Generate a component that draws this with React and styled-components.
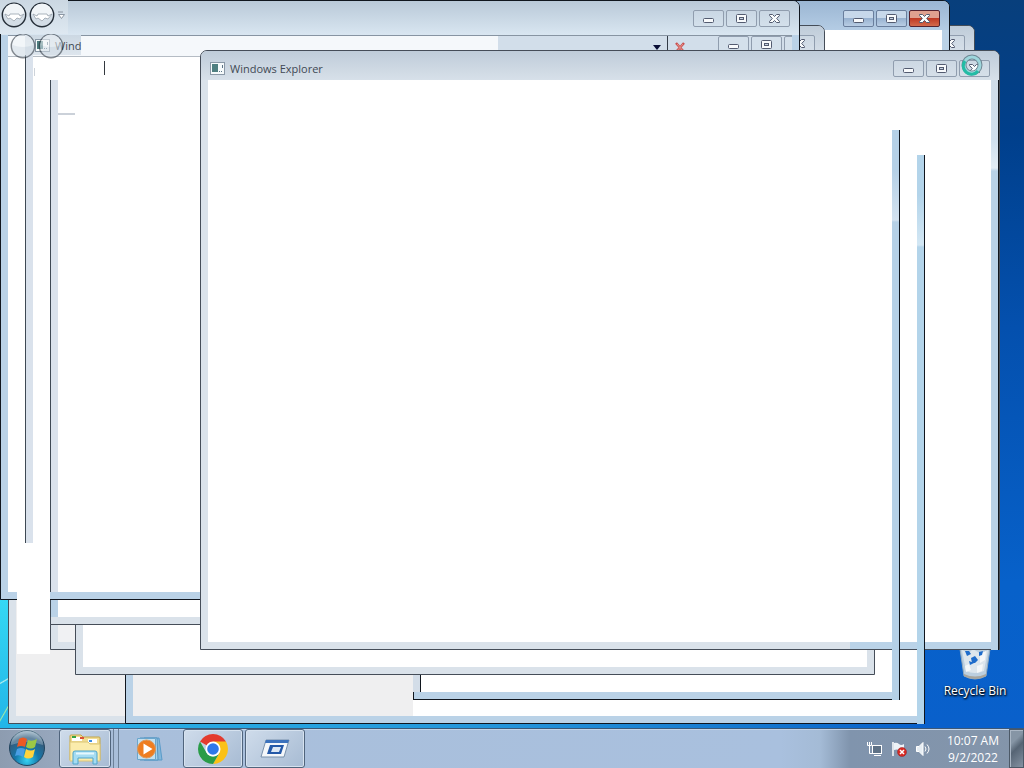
import React from "react";
import styled, { createGlobalStyle, css } from "styled-components";

const backWindows = [
  { x: 8, y: 124, w: 800, h: 600, body: "#efeff0" },
  { x: 175, y: 25, w: 800, h: 600 },
  { x: 150, y: 0, w: 800, h: 600, active: true },
  { x: 125, y: 124, w: 800, h: 600, active: true, split: true },
  { x: 413, y: 130, w: 487, h: 570, active: true, square: true },
  { x: 50, y: 50, w: 800, h: 600, body: "#f0f1f3" },
  { x: 75, y: 75, w: 800, h: 600 },
  { x: 50, y: 25, w: 775, h: 600 },
];

const MinIcon = () => (
  <svg width="13" height="11" viewBox="0 0 13 11">
    <rect x="1.5" y="5.5" width="10" height="4" rx="1" fill="#f8fafc" stroke="#535b70" />
  </svg>
);

const MaxIcon = () => (
  <svg width="13" height="11" viewBox="0 0 13 11">
    <rect x="1.5" y="1.5" width="10" height="8" rx="1" fill="#f8fafc" stroke="#535b70" />
    <rect x="4.5" y="4.5" width="4" height="2" fill="#c8d4e2" stroke="#535b70" />
  </svg>
);

const CloseIcon = () => (
  <svg width="13" height="11" viewBox="0 0 13 11">
    <path
      d="M1.5 1.5h3l2 2 2-2h3v1L8.700 5.500l2.800 3v1h-3l-2-2-2 2h-3v-1l2.800-3-2.800-3z"
      fill="#fafcfd"
      stroke="#535b70"
    />
  </svg>
);

const ExplorerIcon = () => (
  <svg width="15" height="13" viewBox="0 0 15 13">
    <rect x="0.5" y="0.5" width="14" height="12" fill="#f6fafb" stroke="#8a98a6" />
    <rect x="2" y="2" width="6" height="8" fill="#4f7f80" />
    <path d="M9 9.500h1M11 9.500h1M12.500 3v3" stroke="#5c7486" />
  </svg>
);

const NavButton = ({ faded }) => (
  <svg width="26" height="26" viewBox="0 0 26 26" opacity={faded ? 0.55 : 1}>
    <circle cx="13" cy="13" r="11.700" fill="#d3dde6" stroke="#252e38" strokeWidth="1.400" />
    <path d="M2.500 12a10.500 10.500 0 0 1 21 0q-10.500 4-21 0z" fill="#f1f5f8" />
    {!faded && (
      <path
        d="M4 12l4 2 1-2h9l1 2 4-2-4 5-3-1-3 3-4-3-2 1z"
        fill="#fff"
        stroke="#98a2ac"
        strokeWidth="0.800"
      />
    )}
  </svg>
);

const StartOrb = () => (
  <svg width="38" height="38" viewBox="0 0 38 38">
    <defs>
      <radialGradient id="orb" cx="50%" cy="85%" r="85%">
        <stop offset="0" stopColor="#35d2f2" />
        <stop offset="0.400" stopColor="#1477aa" />
        <stop offset="0.750" stopColor="#345c7d" />
        <stop offset="1" stopColor="#a9bdcc" />
      </radialGradient>
    </defs>
    <circle cx="19" cy="19" r="17.500" fill="url(#orb)" stroke="#21445e" />
    <path d="M3 16a16 16 0 0 1 32 0q-16-6-32 0z" fill="#dcebf3" opacity="0.300" />
    <path d="M11 10q4-3 8 0l-2 8q-4-2-8 0z" fill="#ec5a24" />
    <path d="M20 11q4 2 9-1l-2 8q-4 3-9 0z" fill="#9cc845" />
    <path d="M9 20q4-2 8 0l-2 8q-4-3-8-1z" fill="#4a9ee4" />
    <path d="M18 20q5 3 9 0l-2 8q-5 3-9 0z" fill="#ffd33d" />
  </svg>
);

const FolderIcon = () => (
  <svg width="34" height="32" viewBox="0 0 34 32">
    <path d="M2 3q0-1 1-1h10l2 2h16q1 0 1 1v22H2z" fill="#f0dc92" stroke="#c2a64b" />
    <path d="M4 4h10v4H4zM20 6h9v4h-9z" fill="#fff" />
    <path d="M4 3h4v2H4z" fill="#36a344" />
    <path d="M12 4h4v2h-4z" fill="#dc5037" />
    <path d="M21 7h3v2h-3z" fill="#3c8be0" />
    <path d="M2 9h18l2 2h10v17H2z" fill="#fbecac" stroke="#dcc678" />
    <path d="M5 31V20q0-2 2-2h20q2 0 2 2v11h-4v-6H10v6z" fill="#a5dcf2" stroke="#4ea5cc" />
    <path d="M8 20.500h18" stroke="#e5f8ff" strokeWidth="2" />
  </svg>
);

const PlayerIcon = () => (
  <svg width="30" height="28" viewBox="0 0 30 28">
    <path d="M9 3h15l3 22H9z" fill="#83b8dc" stroke="#5a9bc9" />
    <path d="M5 3h17l1 22H5z" fill="#a8d2ea" stroke="#5595c2" />
    <path d="M2.500 3.500h18v21h-18z" fill="#c3e0f0" stroke="#6aa6cc" />
    <circle cx="11.500" cy="14" r="9" fill="#ee7d20" stroke="#dc9a5e" />
    <path d="M8.500 8.500v11l9-5.500z" fill="#fff" />
  </svg>
);

const ChromeLogo = () => (
  <svg width="30" height="30" viewBox="0 0 30 30">
    <path d="M15 15L2.010 7.500A15 15 0 0 1 27.990 7.500z" fill="#e33b2e" />
    <path d="M15 7.500h12.990a15 15 0 0 1-12.990 22.500l6.500-11.200z" fill="#fbc116" />
    <path d="M2.010 7.500l6.500 11.250a7.500 7.500 0 0 0 13 0L15 30A15 15 0 0 1 2.010 7.500z" fill="#2a9c48" />
    <circle cx="15" cy="15" r="7.500" fill="#fff" />
    <circle cx="15" cy="15" r="5.800" fill="#2f78ea" />
  </svg>
);

const AppIcon = () => (
  <svg width="30" height="22" viewBox="0 0 30 22">
    <path d="M6 2h23l-5 17H1z" fill="#f4f7fa" stroke="#7991ac" />
    <path d="M6 2h23l-1 3H5z" fill="#3b72bd" />
    <path d="M10 7h14l-3 9H7z" fill="#2459a8" />
    <path d="M13 9h8l-2 5h-8z" fill="#dce8f5" />
  </svg>
);

const NetworkIcon = () => (
  <svg width="16" height="16" viewBox="0 0 16 16" fill="none" stroke="#fff">
    <rect x="5.500" y="4.500" width="9" height="8" fill="#5e7186" />
    <path d="M7 14.500h7M0.500 1v3.500h4V1M2.500 1v11.500h3" />
  </svg>
);

const FlagIcon = () => (
  <svg width="16" height="16" viewBox="0 0 16 16">
    <path d="M2 1v14" stroke="#fff" strokeWidth="1.500" />
    <path d="M3 2q3-1 5 1t5 0v6q-3 1-5 0t-5 0z" fill="#eef3f8" />
    <circle cx="11" cy="11" r="4.500" fill="#d92b24" stroke="#8f1e22" strokeWidth="0.500" />
    <path d="M9 9l4 4M13 9l-4 4" stroke="#fff" strokeWidth="1.500" />
  </svg>
);

const SpeakerIcon = () => (
  <svg width="16" height="16" viewBox="0 0 16 16" fill="none" stroke="#fff">
    <path d="M1.500 5.500h2.500l4-4v13l-4-4H1.500z" fill="#e6edf3" />
    <path d="M10 5.500q2 2.500 0 5M12 3.500q4 4.500 0 9" />
  </svg>
);

const BinIcon = () => (
  <svg width="34" height="42" viewBox="0 0 34 42">
    <path d="M1 2h32l-5 34q-11 6-22 0z" fill="#bccfdf" stroke="#93a9bc" />
    <path d="M4 10l7 3 4-4 8 5 7-4-4 21q-9 4-18 0z" fill="#dde6ed" />
    <path d="M22 14l6-3-1 9-5 3zM7 26l4-2 2 6-5 2zM19 26l6-2-1 7-5 2z" fill="#f4f7f9" />
    <path d="M7 11l4 0 2 3-4 2zM13 18l4-2 3 4-3 3-3 0zM16 23l-4 2-1-4M21 12l4-1-1 4-3 1z" fill="#1e6ccb" />
    <path d="M6 34q11 5 22 0v2q-11 6-22 0z" fill="#a8a59d" />
  </svg>
);

const Buttons = ({ active }) => (
  <Controls>
    <ControlButton type="button" aria-label="Minimize" $active={active}>
      <MinIcon />
    </ControlButton>
    <ControlButton type="button" aria-label="Maximize" $active={active}>
      <MaxIcon />
    </ControlButton>
    <ControlButton type="button" aria-label="Close" $active={active} $red={active}>
      <CloseIcon />
    </ControlButton>
  </Controls>
);

const App = () => {
  return (
    <Screen>
      <GlobalStyle />
      <Desktop>
        <Shortcut>
          <BinIcon />
          <span>Recycle Bin</span>
        </Shortcut>

        {backWindows.map((win, i) => (
          <Window
            key={i}
            $x={win.x}
            $y={win.y}
            $w={win.w}
            $h={win.h}
            $active={win.active}
            $square={win.square}
          >
            <TitleBar $active={win.active}>
              <Buttons active={win.active} />
            </TitleBar>
            <Body $color={win.body} $split={win.split} />
          </Window>
        ))}
        <Trail $x={413} $y={675} $w={8} $h={17} $edge="right" $color="#d3dde8" />

        <Window $x={0} $y={0} $w={800} $h={600} $active>
          <MainTitleBar>
            <Buttons />
          </MainTitleBar>
          <Body>
            <AddressRow>
              <AddressInput type="text" aria-label="Address" />
              <AddressEnd>
                <DropButton type="button" aria-label="Previous locations">
                  <svg width="8" height="5" viewBox="0 0 8 5">
                    <path d="M0 0h8L4 5z" fill="#080d35" />
                  </svg>
                </DropButton>
                <StopButton type="button" aria-label="Stop">
                  <svg width="12" height="11" viewBox="0 0 12 11">
                    <path d="M2 1l8 9M10 1L2 10" stroke="#c95050" strokeWidth="2.500" />
                    <path d="M3 2l6 7M9 2L3 9" stroke="#eea49c" strokeWidth="0.800" />
                  </svg>
                </StopButton>
                <Buttons />
              </AddressEnd>
            </AddressRow>
          </Body>
        </Window>

        <Trail $x={17} $y={543} $w={33} $h={111} $color="#fff" />
        <Trail $x={25} $y={55} $w={8} $h={488} $edge="left" />
        <Trail $x={50} $y={80} $w={8} $h={512} $edge="left" />
        <Trail $x={50} $y={600} $w={8} $h={17} $edge="left" $color="#bad2e7" />
        <Trail $x={58} $y={113} $w={17} $h={2} $color="#cbd1d9" />
        <Trail $x={34} $y={68} $w={1} $h={8} $color="#cdd3da" />
        <Trail $x={104} $y={61} $w={1} $h={14} $color="#33383e" />

        <TitleGhost>
          <ExplorerIcon />
          <span>Wind</span>
        </TitleGhost>
        <NavGhost>
          <NavButton faded />
          <NavButton faded />
        </NavGhost>
        <NavGroup>
          <NavButton />
          <NavButton />
          <svg width="9" height="9" viewBox="0 0 9 9">
            <path d="M1 1h5M1.500 3.500h6L4.500 7.500z" fill="#fff" stroke="#8b96a3" />
          </svg>
        </NavGroup>

        <Window $x={200} $y={50} $w={800} $h={600}>
          <TitleBar>
            <Title>
              <ExplorerIcon />
              <span>Windows Explorer</span>
            </Title>
            <Buttons />
          </TitleBar>
          <Body />
        </Window>
        <Trail $x={850} $y={642} $w={149} $h={7} $color="#bad3e8" />
        <Trail
          $x={991}
          $y={80}
          $w={8}
          $h={570}
          $edge="right"
          $color="linear-gradient(#cfdce8 0, #d0dfed 60px, #e4edf5 88px, #b9d2e7 91px)"
        />
        <Trail
          $x={892}
          $y={130}
          $w={8}
          $h={570}
          $edge="right"
          $color="linear-gradient(#b5d0e6 0, #b5d0e6 40px, #d3e2f0 90px, #b5d0e6 92px)"
        />
        <Trail
          $x={917}
          $y={155}
          $w={8}
          $h={569}
          $edge="right"
          $color="linear-gradient(#b3d4ea 0, #b3d4ea 40px, #d3e7f4 90px, #b3d4ea 92px)"
        />

        <BusyCursor width="22" height="22" viewBox="0 0 22 22">
          <circle cx="11" cy="11" r="8" fill="none" stroke="#6f8794" strokeWidth="5" />
          <circle cx="11" cy="11" r="8" fill="none" stroke="#9ed6dc" strokeWidth="3" />
          <path d="M4 7a8 8 0 0 0 13 10" fill="none" stroke="#23bca5" strokeWidth="3" />
        </BusyCursor>
      </Desktop>

      <Taskbar>
        <StartButton type="button" aria-label="Start">
          <StartOrb />
        </StartButton>
        <TaskButton type="button" aria-label="Windows Explorer" $w={52} $open>
          <FolderIcon />
        </TaskButton>
        <Stack />
        <TaskButton type="button" aria-label="Media Player" $w={62}>
          <PlayerIcon />
        </TaskButton>
        <TaskButton type="button" aria-label="Chrome" $w={60} $open>
          <ChromeLogo />
        </TaskButton>
        <TaskButton type="button" aria-label="Application" $w={60} $open>
          <AppIcon />
        </TaskButton>
        <Tray>
          <NetworkIcon />
          <FlagIcon />
          <SpeakerIcon />
          <Clock>
            <span>10:07 AM</span>
            <span>9/2/2022</span>
          </Clock>
        </Tray>
        <ShowDesktop type="button" aria-label="Show desktop" />
      </Taskbar>
    </Screen>
  );
};

const GlobalStyle = createGlobalStyle`
  * {
    box-sizing: border-box;
  }
  body {
    margin: 0;
    font-family: "Open Sans", "Noto Sans", sans-serif;
    font-size: 12px;
    line-height: 17px;
  }
  button {
    padding: 0;
    border: 0;
    background: none;
    font: inherit;
  }
  svg {
    display: block;
    flex-shrink: 0;
  }
`;

const Screen = styled.div`
  display: flex;
  flex-direction: column;
  min-height: 100vh;
`;

const Desktop = styled.main`
  position: relative;
  flex: 1;
  overflow: hidden;
  background:
    linear-gradient(150deg, transparent 45%, #b5f0ee 50%, transparent 55%) 0 670px / 12px 20px no-repeat,
    linear-gradient(120deg, transparent 45%, #9fe8a8 50%, transparent 55%) 0 700px / 10px 24px no-repeat,
    linear-gradient(#35d8f4, #22b5e8) 0 600px / 10px 128px no-repeat,
    linear-gradient(90deg, #2bb7e8 0%, #2494da 50%, #1476cf 75%, transparent 91%) 0 720px / 100% 8px no-repeat,
    linear-gradient(#083f7c 0%, #003f8b 18%, #0450ae 45%, #0761ca 80%, #0960cb 100%);
`;

const Window = styled.section`
  position: absolute;
  left: ${(props) => props.$x}px;
  top: ${(props) => props.$y}px;
  width: ${(props) => props.$w}px;
  height: ${(props) => props.$h}px;
  display: flex;
  flex-direction: column;
  padding: 0 7px 7px;
  overflow: hidden;
  border: 1px solid ${(props) => (props.$active ? "#10161e" : "#454d58")};
  border-radius: ${(props) => (props.$square ? "0" : "7px 7px 0 0")};
  background: ${(props) => (props.$active ? "#bad2e7" : "#dae2ea")};
`;

const TitleBar = styled.header`
  display: flex;
  justify-content: space-between;
  flex-shrink: 0;
  height: 29px;
  margin: 0 -7px;
  padding: 0 9px;
  background: ${(props) =>
    props.$active
      ? "linear-gradient(#9bb6d3, #b4cce4)"
      : "linear-gradient(#bfccd9, #d7e0e9)"};
`;

const MainTitleBar = styled(TitleBar)`
  height: 34px;
  background: linear-gradient(#b9c9d8, #d9e6f1);
`;

const Title = styled.div`
  display: flex;
  align-items: center;
  gap: 5px;
  padding-top: 6px;
  color: #3f4954;
  font-size: 11px;
`;

const Controls = styled.div`
  display: flex;
  gap: 2px;
  margin-left: auto;
  padding-top: 9px;
`;

const ControlButton = styled.button`
  display: flex;
  align-items: center;
  justify-content: center;
  width: 31px;
  height: 17px;
  border: 1px solid #909dae;
  border-radius: 2px;
  background: rgba(220, 230, 240, 0.3);
  ${(props) =>
    props.$active &&
    css`
      border-color: #697e9c;
      background: linear-gradient(#c7d8ea 48%, #98b2d0 50%, #b8cde4);
    `}
  ${(props) =>
    props.$red &&
    css`
      border-color: #542330;
      background: linear-gradient(#dfa08f 48%, #bf3a24 50%, #d36a4c);
    `}
`;

const Body = styled.div`
  flex: 1;
  background: ${(props) =>
    props.$split
      ? "linear-gradient(90deg, #efeff0 280px, #fff 280px)"
      : props.$color || "#fff"};
`;

const AddressRow = styled.div`
  display: flex;
  height: 22px;
  border-top: 1px solid #8794a2;
`;

const AddressInput = styled.input`
  width: 490px;
  border: 0;
  border-bottom: 1px solid #b5bcc4;
  background: #f5f8fb;
`;

const AddressEnd = styled.div`
  display: flex;
  flex: 1;
  overflow: hidden;
  background: #d2deea;

  ${Controls} {
    padding: 0;
    margin-right: -23px;
  }
`;

const DropButton = styled.button`
  display: flex;
  align-items: flex-end;
  justify-content: flex-end;
  width: 170px;
  height: 15px;
  padding: 0 6px 1px;
  border-right: 1px solid #333c47;
`;

const StopButton = styled.button`
  width: 24px;
  height: 20px;
  padding: 2px 6px 0;
`;

const Trail = styled.div`
  position: absolute;
  left: ${(props) => props.$x}px;
  top: ${(props) => props.$y}px;
  width: ${(props) => props.$w}px;
  height: ${(props) => props.$h}px;
  background: ${(props) => props.$color || "#dae2ec"};
  ${(props) => props.$edge === "left" && "border-left: 1px solid #3e4954;"}
  ${(props) => props.$edge === "right" && "border-right: 1px solid #10161e;"}
`;

const TitleGhost = styled.div`
  position: absolute;
  left: 25px;
  top: 35px;
  display: flex;
  align-items: center;
  gap: 5px;
  height: 20px;
  padding-left: 10px;
  color: #3f4954;
  font-size: 11px;
  background: linear-gradient(#ccd8e3, #dde5ed);
`;

const NavGhost = styled.div`
  position: absolute;
  left: 10px;
  top: 33px;
  display: flex;
  gap: 2px;
`;

const NavGroup = styled.div`
  position: absolute;
  left: 0;
  top: 0;
  display: flex;
  align-items: center;
  gap: 2px;
  width: 68px;
  padding: 2px 0 6px 1px;
  background: linear-gradient(#cbd7e2, #dee8f1);
`;

const BusyCursor = styled.svg`
  position: absolute;
  left: 961px;
  top: 54px;
`;

const Shortcut = styled.a.attrs({ href: "#" })`
  position: absolute;
  left: 935px;
  top: 640px;
  display: flex;
  flex-direction: column;
  align-items: center;
  width: 80px;
  color: #fff;
  text-decoration: none;
  text-shadow: 1px 1px 2px #000, 0 1px 2px #000;
`;

const Taskbar = styled.footer`
  display: flex;
  align-items: stretch;
  height: 40px;
  border-top: 1px solid #3d5877;
  box-shadow: inset 0 1px 0 #c4d5e8;
  background: linear-gradient(
    90deg,
    #8d9cb0 0,
    #97a7bd 55px,
    #a9bfdb 120px,
    #a9c0de 780px,
    #a4bbd6 820px,
    #8094ad 850px,
    #8495aa 100%
  );
`;

const StartButton = styled.button`
  display: flex;
  justify-content: center;
  width: 59px;
  padding-right: 5px;
`;

const TaskButton = styled.button`
  display: flex;
  align-items: center;
  justify-content: center;
  width: ${(props) => props.$w}px;
  margin-right: 2px;
  ${(props) =>
    props.$open &&
    css`
      border: 1px solid #50647c;
      border-radius: 3px;
      box-shadow: inset 0 0 0 1px #d6e2ef;
      background: linear-gradient(135deg, #cfdceb, #a7bbd3);
    `}
`;

const Stack = styled.div`
  width: 6px;
  border-left: 1px solid #6d8199;
  border-right: 1px solid #6d8199;
`;

const Tray = styled.div`
  display: flex;
  align-items: center;
  gap: 8px;
  margin-left: auto;
  padding-right: 10px;
`;

const Clock = styled.time`
  display: flex;
  flex-direction: column;
  align-items: center;
  margin-left: 8px;
  color: #fff;
`;

const ShowDesktop = styled.button`
  width: 15px;
  border: 1px solid #4c5967;
  box-shadow: inset 1px 1px 0 #aab6c4;
  background: linear-gradient(135deg, #8695a5 30%, #566474 50%, #8492a2);
`;

export default App;
